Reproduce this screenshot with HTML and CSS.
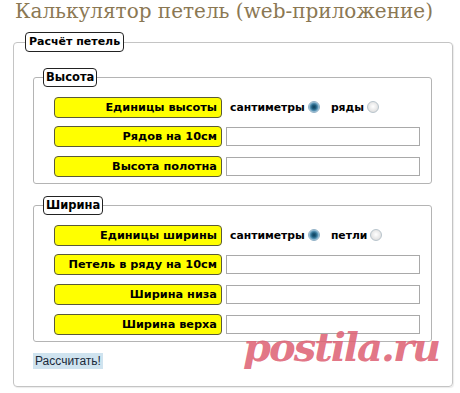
FILE: index.html
```html
<!DOCTYPE html>
<html lang="ru">
<head>
<meta charset="utf-8">
<title>Калькулятор петель</title>
<link rel="stylesheet" href="styles.css">
</head>
<body>
<h1 class="title">Калькулятор петель (web-приложение)</h1>
<div class="wrap">
  <fieldset class="outer">
    <legend class="legend legend-outer">Расчёт петель</legend>

    <fieldset class="inner">
      <legend class="legend legend-inner">Высота</legend>
      <div class="row row-radio">
        <span class="label">Единицы высоты</span>
        <div class="choice">
          <span class="opt">сантиметры</span><input class="radio" type="radio" name="h" checked>
          <span class="opt opt-2">ряды</span><input class="radio" type="radio" name="h">
        </div>
      </div>
      <div class="row">
        <span class="label">Рядов на 10см</span>
        <input class="field" type="text">
      </div>
      <div class="row">
        <span class="label">Высота полотна</span>
        <input class="field" type="text">
      </div>
    </fieldset>

    <fieldset class="inner inner-2">
      <legend class="legend legend-inner">Ширина</legend>
      <div class="row row-radio">
        <span class="label">Единицы ширины</span>
        <div class="choice">
          <span class="opt">сантиметры</span><input class="radio" type="radio" name="w" checked>
          <span class="opt opt-2">петли</span><input class="radio" type="radio" name="w">
        </div>
      </div>
      <div class="row">
        <span class="label">Петель в ряду на 10см</span>
        <input class="field" type="text">
      </div>
      <div class="row">
        <span class="label">Ширина низа</span>
        <input class="field" type="text">
      </div>
      <div class="row">
        <span class="label">Ширина верха</span>
        <input class="field" type="text">
      </div>
    </fieldset>

    <button class="btn" type="button">Рассчитать!</button>
  </fieldset>
</div>
<div class="watermark">postila.ru</div>
</body>
</html>
```
FILE: styles.css
```css
html, body {
  margin: 0;
  padding: 0;
  background: #fff;
}
body {
  position: relative;
  width: 460px;
  height: 393px;
  overflow: hidden;
  font-family: "DejaVu Sans", Verdana, sans-serif;
}
.title {
  margin: 0;
  padding: 0 0 0 15px;
  height: 32px;
  line-height: 22px;
  font-family: "DejaVu Serif", "Liberation Serif", serif;
  font-weight: normal;
  font-size: 20px;
  color: #8b7853;
  white-space: nowrap;
}
.wrap {
  padding-left: 13px;
  width: 440px;
}
fieldset {
  margin: 0;
  min-width: 0;
}
.outer {
  border: 1px solid #c4c4c4;
  border-radius: 4px;
  padding: 0 20px 17px 19px;
  box-shadow: 1px 1px 1px rgba(0,0,0,0.08);
}
.legend {
  border: 1px solid #222;
  border-radius: 4px;
  background: #fff;
  font-weight: bold;
  font-size: 11.5px;
  line-height: 17px;
  color: #000;
}
.legend-outer {
  margin-left: -8px;
  padding: 0 3px;
  font-size: 11px;
  line-height: 18px;
}
.inner {
  margin-top: 16px;
  border: 1px solid #b4b4b4;
  border-radius: 3px;
  padding: 10px 10px 6px 20px;
}
.inner-2 {
  margin-top: 12px;
}
.legend-inner {
  margin-left: -11px;
  padding: 0 2px;
}
.row {
  display: flex;
  align-items: center;
  margin-bottom: 9px;
}
.row:last-child {
  margin-bottom: 0;
}
.row-radio {
  margin-bottom: 8px;
}
.label {
  box-sizing: border-box;
  width: 168px;
  height: 21px;
  flex: none;
  background: #ffff00;
  border: 1px solid #5a5a3a;
  border-radius: 4px;
  text-align: right;
  padding-right: 4px;
  font-weight: bold;
  font-size: 11.3px;
  line-height: 19px;
  color: #000;
  white-space: nowrap;
}
.field {
  box-sizing: border-box;
  margin: 0 0 0 4px;
  width: 194px;
  height: 19px;
  border: 1px solid #a9a9a9;
  border-radius: 0;
  padding: 0 2px;
  background: #fff;
  outline: none;
}
.choice {
  display: flex;
  align-items: center;
  margin-left: 8px;
}
.opt {
  font-weight: bold;
  font-size: 10.8px;
  color: #000;
}
.opt-2 {
  margin-left: 11px;
}
.radio {
  appearance: none;
  -webkit-appearance: none;
  box-sizing: border-box;
  width: 12px;
  height: 12px;
  margin: 0 0 2px 3px;
  border-radius: 50%;
  border: 1px solid #b8c4cc;
  background: radial-gradient(circle at 50% 45%, #ffffff 0%, #e6e6e6 60%, #cfcfcf 100%);
}
.radio:checked {
  border-color: #8fb0c6;
  background: radial-gradient(circle at 50% 50%, #0f3d5a 0%, #1f5f80 30%, #5d97b8 55%, #dbe9f2 80%);
}
.btn {
  margin-top: 11px;
  height: 16px;
  padding: 0 2px;
  border: none;
  background: #cfe3ef;
  font-family: "Liberation Sans", Arial, sans-serif;
  font-size: 12px;
  line-height: 16px;
  color: #1a2a3a;
}
.watermark {
  position: absolute;
  left: 243px;
  top: 322px;
  font-family: "DejaVu Serif", serif;
  font-style: italic;
  font-weight: bold;
  font-size: 40px;
  line-height: 50px;
  color: rgba(222, 100, 118, 0.9);
  letter-spacing: -2px;
  white-space: nowrap;
}
```
